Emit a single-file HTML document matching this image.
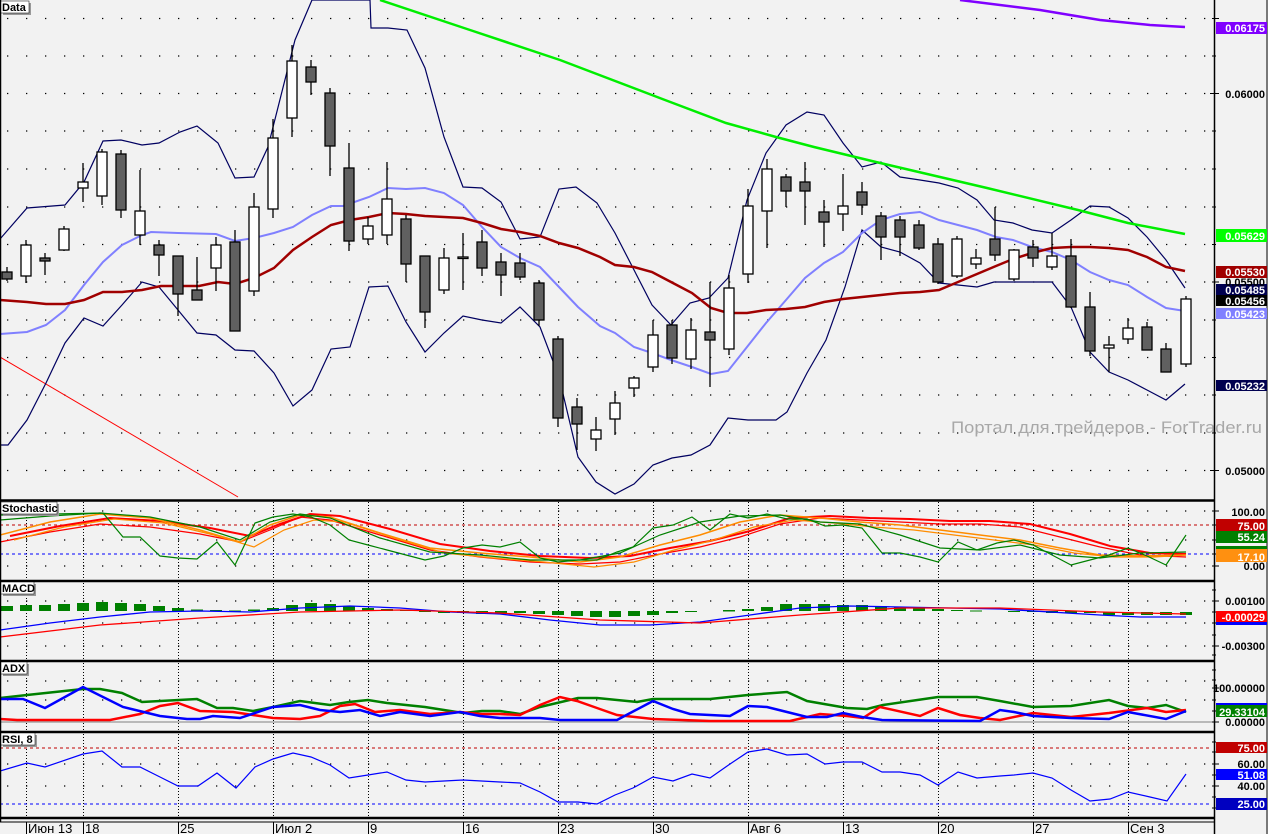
<!DOCTYPE html>
<html><head><meta charset="utf-8"><style>
html,body{margin:0;padding:0;background:#f2f2f2}
svg{display:block}
.ax{font-family:"Liberation Sans",sans-serif;font-weight:bold;font-size:11px;fill:#000}
.lb{font-family:"Liberation Sans",sans-serif;font-weight:bold;font-size:11px;fill:#fff}
.dt{font-family:"Liberation Sans","DejaVu Sans",sans-serif;font-size:13px;fill:#000}
.tt{font-family:"Liberation Sans",sans-serif;font-weight:bold;font-size:11px;fill:#000}
</style></head><body>
<svg width="1268" height="834" viewBox="0 0 1268 834" xmlns="http://www.w3.org/2000/svg">
<rect width="1268" height="834" fill="#f2f2f2"/>
<g stroke="#000" stroke-width="1.3" stroke-dasharray="1.3 17.7" stroke-dashoffset="-7">
<path d="M0 18.5H1210M0 56H1210M0 93.5H1210M0 131H1210M0 169H1210M0 207H1210M0 244.5H1210M0 282H1210M0 320H1210M0 357.5H1210M0 395H1210M0 433H1210M0 470.5H1210"/>
<path d="M0 511H1210M0 540H1210M0 566H1210M0 601H1210M0 623H1210M0 646H1210M0 681H1210M0 700H1210M0 764H1210M0 786H1210"/>
</g>
<g stroke="#000" stroke-width="1" stroke-dasharray="1 2">
<path d="M26.5 502V580M83.5 502V580M178.5 502V580M273.5 502V580M368.5 502V580M463.5 502V580M558.5 502V580M653.5 502V580M748.5 502V580M843.5 502V580M938.5 502V580M1033.5 502V580M1128.5 502V580"/>
<path d="M26.5 583V660M83.5 583V660M178.5 583V660M273.5 583V660M368.5 583V660M463.5 583V660M558.5 583V660M653.5 583V660M748.5 583V660M843.5 583V660M938.5 583V660M1033.5 583V660M1128.5 583V660"/>
<path d="M26.5 663V730M83.5 663V730M178.5 663V730M273.5 663V730M368.5 663V730M463.5 663V730M558.5 663V730M653.5 663V730M748.5 663V730M843.5 663V730M938.5 663V730M1033.5 663V730M1128.5 663V730"/>
<path d="M26.5 734V816M83.5 734V816M178.5 734V816M273.5 734V816M368.5 734V816M463.5 734V816M558.5 734V816M653.5 734V816M748.5 734V816M843.5 734V816M938.5 734V816M1033.5 734V816M1128.5 734V816"/>
</g>
<path d="M0 357L238 497" stroke="#ff0000" stroke-width="1" fill="none"/>
<g fill="none" stroke="#000060" stroke-width="1.2">
<polyline points="0,239 27,208 65,205 84,182 103,141 121,140 142,145 159,143 180,132 197,126 218,143 235,178 254,177 268,147 295,40 312,0 370,0 371,28 388,28 407,30 425,68 444,137 463,187 482,188 501,202 520,239 540,237 559,189 576,187 597,203 615,233 652,305 671,325 690,303 709,298 728,278 747,200 766,153 786,125 807,112 824,115 843,143 862,167 881,162 900,177 920,180 939,183 958,188 977,200 994,220 1013,223 1032,230 1052,233 1071,220 1090,206 1109,207 1128,218 1147,237 1166,260 1185,288"/>
<polyline points="0,445 8,445 27,420 46,383 65,343 84,318 103,326 122,305 142,282 159,287 178,310 197,333 216,335 235,350 254,351 274,373 293,406 312,390 331,349 350,347 369,287 388,286 406,322 425,352 444,333 463,316 482,320 501,323 520,307 540,327 559,377 578,457 596,482 615,494 634,484 653,465 672,458 691,455 710,445 728,418 748,420 776,420 787,412 807,373 826,340 845,287 862,230 881,247 900,252 920,263 939,283 958,285 977,287 994,282 1052,282 1071,307 1090,352 1109,372 1128,380 1147,390 1166,400 1185,384"/>
</g>
<polyline fill="none" stroke="#8080ff" stroke-width="2" points="0,334 27,332 46,325 65,310 84,285 103,262 122,245 142,235 151,232 178,233 216,234 235,241 254,238 274,233 293,227 312,215 331,206 343,206 369,197 388,188 406,189 425,188 444,193 463,205 482,227 501,247 520,258 540,267 559,287 578,307 600,326 615,333 634,347 652,353 671,360 692,367 711,374 728,371 747,347 766,323 786,300 805,278 824,263 843,252 862,233 881,220 900,214 920,212 939,220 958,225 977,230 996,237 1013,240 1032,247 1052,252 1071,260 1090,272 1109,280 1128,285 1147,297 1166,308 1185,311"/>
<polyline fill="none" stroke="#a00000" stroke-width="2.5" points="0,300 27,302 46,304 65,304 84,300 103,292 122,292 142,290 161,286 199,286 218,282 235,284 254,278 274,268 293,250 312,237 331,225 350,220 369,217 388,213 406,214 425,216 444,217 463,218 482,223 501,229 520,232 540,236 559,243 578,248 600,257 615,265 634,267 652,272 671,282 692,293 711,308 728,313 747,313 766,310 786,309 805,307 824,302 843,299 862,297 881,295 900,293 920,292 939,290 958,282 977,274 996,266 1013,259 1032,253 1052,248 1071,247 1090,247 1109,248 1128,250 1147,257 1166,267 1185,271"/>
<polyline fill="none" stroke="#00ee00" stroke-width="2.5" points="380,0 470,30 560,60 665,100 726,123 776,137 814,147 876,162 987,188 1078,210 1128,223 1185,234"/>
<polyline fill="none" stroke="#8000ff" stroke-width="2.5" points="960,0 1040,10 1100,20 1150,25 1185,27"/>
<g stroke="#000" stroke-width="1.3">
<path d="M7 267V281M26 240V283M45 253V275M64 226V251M83 163V202M102 149V205M121 150V218M140 170V245M159 240V276M178 256V316M197 257V300M216 237V291M235 230V331M254 193V296M273 119V218M292 45V137M311 60V95M330 88V176M349 143V251M368 217V244M387 162V244M406 215V282M425 256V328M444 248V294M463 233V290M482 230V276M501 253V296M520 253V280M539 280V326M558 336V427M577 398V450M596 417V451M615 391V435M634 376V397M653 320V372M672 320V364M691 318V369M710 282V387M729 275V355M748 189V283M767 159V248M786 174V207M805 162V225M824 200V247M843 174V231M862 182V215M881 212V260M900 216V256M919 220V250M938 238V284M957 236V278M976 249V269M995 207V261M1014 249V281M1033 240V267M1052 233V270M1071 239V308M1090 292V356M1109 336V372M1128 318V344M1147 322V350M1166 343V372M1186 296V367"/>
</g>
<g stroke="#000" stroke-width="1.3" fill="#606060">
<rect x="2" y="272" width="10" height="7"/><rect x="40" y="258" width="10" height="3"/><rect x="116" y="154" width="10" height="56"/><rect x="154" y="245" width="10" height="10"/><rect x="173" y="256" width="10" height="38"/><rect x="192" y="290" width="10" height="10"/><rect x="230" y="242" width="10" height="89"/><rect x="306" y="67" width="10" height="15"/><rect x="325" y="93" width="10" height="53"/><rect x="344" y="168" width="10" height="73"/><rect x="401" y="219" width="10" height="45"/><rect x="420" y="256" width="10" height="56"/><rect x="477" y="242" width="10" height="26"/><rect x="496" y="262" width="10" height="13"/><rect x="515" y="263" width="10" height="14"/><rect x="534" y="283" width="10" height="37"/><rect x="553" y="339" width="10" height="79"/><rect x="572" y="407" width="10" height="17"/><rect x="667" y="325" width="10" height="33"/><rect x="705" y="332" width="10" height="8"/><rect x="781" y="177" width="10" height="14"/><rect x="800" y="182" width="10" height="9"/><rect x="819" y="212" width="10" height="10"/><rect x="857" y="192" width="10" height="13"/><rect x="876" y="216" width="10" height="21"/><rect x="895" y="220" width="10" height="17"/><rect x="914" y="225" width="10" height="23"/><rect x="933" y="244" width="10" height="38"/><rect x="990" y="239" width="10" height="16"/><rect x="1028" y="247" width="10" height="11"/><rect x="1066" y="256" width="10" height="51"/><rect x="1085" y="307" width="10" height="44"/><rect x="1142" y="327" width="10" height="23"/><rect x="1161" y="349" width="10" height="23"/>
</g>
<g stroke="#000" stroke-width="1.3" fill="#fff">
<rect x="21" y="245" width="10" height="31"/><rect x="59" y="229" width="10" height="21"/><rect x="78" y="182" width="10" height="6"/><rect x="97" y="152" width="10" height="44"/><rect x="135" y="211" width="10" height="24"/><rect x="211" y="245" width="10" height="23"/><rect x="249" y="207" width="10" height="84"/><rect x="268" y="138" width="10" height="71"/><rect x="287" y="61" width="10" height="57"/><rect x="363" y="226" width="10" height="13"/><rect x="382" y="199" width="10" height="36"/><rect x="439" y="258" width="10" height="32"/><rect x="458" y="257" width="10" height="1.5"/><rect x="591" y="430" width="10" height="9"/><rect x="610" y="403" width="10" height="16"/><rect x="629" y="378" width="10" height="10"/><rect x="648" y="335" width="10" height="32"/><rect x="686" y="330" width="10" height="29"/><rect x="724" y="288" width="10" height="61"/><rect x="743" y="206" width="10" height="68"/><rect x="762" y="169" width="10" height="42"/><rect x="838" y="206" width="10" height="8"/><rect x="952" y="239" width="10" height="37"/><rect x="971" y="258" width="10" height="6"/><rect x="1009" y="250" width="10" height="29"/><rect x="1047" y="256" width="10" height="11"/><rect x="1104" y="345" width="10" height="3"/><rect x="1123" y="328" width="10" height="11"/><rect x="1181" y="299" width="10" height="65"/>
</g>
<text x="951" y="433" font-family="Liberation Sans,sans-serif" font-size="17" fill="#a8a8a8" textLength="311" lengthAdjust="spacingAndGlyphs">Портал для трейдеров - ForTrader.ru</text>

<path d="M0 525H1210" stroke="#c00000" stroke-width="1" stroke-dasharray="3 3"/>
<path d="M0 554H1210" stroke="#0000ff" stroke-width="1" stroke-dasharray="3 3"/>
<g fill="none">
<polyline stroke="#ff0000" stroke-width="1.2" transform="translate(0,12)" points="0,530 50,520 100,512 150,515 200,522 240,530 270,518 300,505 330,508 380,523 430,538 480,545 530,550 580,552 620,550 660,542 700,535 740,525 780,512 820,506 860,508 900,510 940,512 980,512 1020,515 1060,525 1100,535 1140,543 1186,545"/>
<polyline stroke="#ff0000" stroke-width="2" transform="translate(10,6)" points="0,530 50,520 100,512 150,515 200,522 240,530 270,518 300,508 330,510 380,523 430,538 480,545 530,550 580,552 620,550 660,542 700,535 740,525 780,512 820,510 860,512 900,513 940,515 980,515 1020,518 1060,528 1100,540 1140,547 1176,548"/>
<polyline stroke="#ff8c00" stroke-width="1.5" points="0,535 50,522 100,514 150,518 200,530 240,542 270,525 300,515 330,517 380,533 430,548 480,553 530,557 580,562 620,557 660,545 700,535 740,522 780,515 820,518 860,522 900,525 940,530 980,535 1020,540 1060,548 1100,555 1140,556 1186,555"/>
<polyline stroke="#ff8c00" stroke-width="1.2" transform="translate(14,5)" points="0,535 50,522 100,514 150,518 200,530 240,542 270,525 300,515 330,517 380,533 430,548 480,553 530,557 580,562 620,557 660,545 700,535 740,522 780,515 820,518 860,522 900,525 940,530 980,535 1020,540 1060,548 1100,552 1140,552 1172,550"/>
<polyline stroke="#008000" stroke-width="1.2" points="0,520 50,516 100,513 150,517 200,527 240,540 270,522 300,514 330,518 380,538 430,552 480,555 530,560 580,560 620,553 660,535 700,522 740,516 780,515 820,522 860,524 900,535 940,548 980,550 1020,545 1060,555 1100,558 1140,553 1186,552"/>
<polyline stroke="#008000" stroke-width="1.2" points="0,515 20,515 53,514 103,513 123,537 140,537 160,556 178,558 197,559 217,542 235,565 255,523 273,517 293,514 311,517 330,525 349,540 368,545 387,550 406,555 425,560 444,556 463,548 482,545 500,547 520,542 540,558 558,562 578,560 597,560 617,552 633,547 653,528 673,525 692,517 710,530 730,514 748,518 767,514 787,519 807,519 825,526 843,525 862,528 882,553 900,553 920,557 938,562 958,542 977,550 997,543 1014,540 1033,545 1052,555 1071,565 1090,560 1109,555 1128,548 1147,556 1166,565 1186,535"/>
</g>

<g fill="#008000">
<rect x="1" y="606" width="12" height="5"/><rect x="20" y="605" width="12" height="6"/><rect x="39" y="605" width="12" height="6"/><rect x="58" y="604" width="12" height="7"/><rect x="77" y="603" width="12" height="8"/><rect x="96" y="602" width="12" height="9"/><rect x="115" y="603" width="12" height="8"/><rect x="134" y="604" width="12" height="7"/><rect x="153" y="606" width="12" height="5"/><rect x="172" y="608" width="12" height="3"/><rect x="191" y="609.5" width="12" height="1.5"/><rect x="210" y="610" width="12" height="1"/><rect x="229" y="610.5" width="12" height="1"/><rect x="248" y="609.5" width="12" height="1.5"/><rect x="267" y="608" width="12" height="3"/><rect x="286" y="605" width="12" height="6"/><rect x="305" y="603" width="12" height="8"/><rect x="324" y="604" width="12" height="7"/><rect x="343" y="606" width="12" height="5"/><rect x="362" y="608" width="12" height="3"/><rect x="381" y="609" width="12" height="2"/><rect x="400" y="610" width="12" height="1"/><rect x="419" y="611" width="12" height="1"/><rect x="438" y="611" width="12" height="2"/><rect x="457" y="611" width="12" height="2"/><rect x="476" y="611" width="12" height="3"/><rect x="495" y="611" width="12" height="3"/><rect x="514" y="611" width="12" height="2"/><rect x="533" y="611" width="12" height="3"/><rect x="552" y="611" width="12" height="4"/><rect x="571" y="611" width="12" height="5"/><rect x="590" y="611" width="12" height="6"/><rect x="609" y="611" width="12" height="6"/><rect x="628" y="611" width="12" height="5"/><rect x="647" y="611" width="12" height="4"/><rect x="666" y="611" width="12" height="2"/><rect x="685" y="611" width="12" height="1"/><rect x="723" y="610" width="12" height="1.5"/><rect x="742" y="609" width="12" height="2"/><rect x="761" y="607" width="12" height="4"/><rect x="780" y="604" width="12" height="7"/><rect x="799" y="604" width="12" height="7"/><rect x="818" y="604" width="12" height="7"/><rect x="837" y="605" width="12" height="6"/><rect x="856" y="605" width="12" height="6"/><rect x="875" y="606" width="12" height="5"/><rect x="894" y="607" width="12" height="4"/><rect x="913" y="608" width="12" height="3"/><rect x="932" y="609" width="12" height="2"/><rect x="951" y="610" width="12" height="1"/><rect x="970" y="610.5" width="12" height="1"/><rect x="1008" y="611" width="12" height="1"/><rect x="1027" y="611" width="12" height="1"/><rect x="1046" y="611" width="12" height="2"/><rect x="1065" y="611" width="12" height="2"/><rect x="1084" y="611" width="12" height="2"/><rect x="1103" y="612" width="12" height="3"/><rect x="1122" y="612" width="12" height="3"/><rect x="1141" y="612" width="12" height="3"/><rect x="1160" y="612" width="12" height="3"/><rect x="1180" y="612" width="12" height="3"/>
</g>
<polyline fill="none" stroke="#0000ff" stroke-width="1.3" points="0,630 50,623 100,617 150,612 200,611 250,612 300,608 350,606 400,608 450,612 500,614 550,620 600,625 650,625 700,622 750,615 800,608 850,606 900,607 950,608 1000,609 1100,615 1140,617 1186,617"/>
<polyline fill="none" stroke="#ff0000" stroke-width="1.3" points="0,637 100,625 200,618 300,612 400,610 500,613 600,620 700,623 800,615 900,608 1000,608 1100,612 1186,614"/>

<path d="M0 722H1214" stroke="#808080" stroke-width="1"/>
<polyline fill="none" stroke="#008000" stroke-width="2.5" points="0,698 27,695 83,689 100,689 122,693 142,702 197,699 217,708 233,708 253,711 273,707 300,701 330,705 349,702 368,700 387,703 406,705 425,707 444,710 463,713 482,711 500,711 520,714 540,707 578,698 597,698 637,702 653,699 710,699 748,695 787,692 807,701 847,708 867,709 883,705 938,697 977,697 1000,701 1033,707 1071,706 1109,700 1128,706 1147,708 1166,705 1186,712"/>
<polyline fill="none" stroke="#ff0000" stroke-width="2.5" points="0,719 17,720 110,720 140,714 160,706 178,703 200,711 233,712 253,715 273,718 300,719 320,716 340,706 355,704 375,712 400,710 430,714 460,712 480,714 500,714 520,715 540,705 560,697 577,701 597,708 617,715 653,719 710,721 790,721 820,714 847,716 863,718 880,707 920,716 938,708 960,715 980,718 1000,720 1033,713 1071,717 1109,713 1147,708 1166,712 1186,710"/>
<polyline fill="none" stroke="#0000ff" stroke-width="2.5" points="0,699 23,699 45,708 83,687 123,707 160,716 187,719 200,719 213,716 240,718 273,707 300,705 320,710 340,712 360,710 380,716 400,712 430,716 460,712 480,716 500,718 540,718 560,720 617,720 653,701 673,709 690,714 730,716 748,706 767,707 787,712 807,717 827,717 843,713 862,717 882,720 980,721 1000,710 1014,712 1033,716 1071,718 1109,719 1128,712 1166,719 1186,711"/>

<path d="M0 748H1210" stroke="#c00000" stroke-width="1" stroke-dasharray="3 3"/>
<path d="M0 804H1210" stroke="#0000ff" stroke-width="1" stroke-dasharray="3 3"/>
<polyline fill="none" stroke="#0000ff" stroke-width="1.2" points="0,771 27,763 45,767 83,754 102,751 122,767 140,767 160,777 178,786 198,786 217,773 236,788 255,767 273,759 293,753 311,757 330,765 349,778 368,775 387,772 406,780 425,782 463,780 500,782 520,783 540,792 558,802 578,802 597,804 615,795 633,788 653,777 673,781 692,774 710,778 730,764 748,752 767,749 787,755 807,754 825,764 843,762 862,762 882,772 900,772 920,775 938,785 958,772 977,778 1000,776 1014,775 1033,773 1052,778 1071,790 1090,801 1110,799 1128,792 1150,797 1167,801 1186,774"/>

<g stroke="#000" stroke-width="2.5">
<path d="M0 500.5H1214M0 581H1214M0 661H1214M0 732H1214M0 818H1214"/>
</g>
<path d="M0 822H1214" stroke="#000" stroke-width="1"/>
<path d="M1214.5 0V834" stroke="#000" stroke-width="1.5"/>
<path d="M0.5 0V822" stroke="#000" stroke-width="1.5"/>
<path d="M1267 0V834" stroke="#000" stroke-width="1"/>
<g stroke="#000" stroke-width="1">
<path d="M1212 18.5H1219M1212 56H1216M1210 93.5H1219M1212 131H1216M1212 169H1216M1212 207H1216M1212 244.5H1216M1212 282H1219M1212 320H1216M1212 357.5H1216M1212 395H1216M1212 433H1216M1210 470.5H1219"/>
<path d="M1212 511H1219M1212 525H1216M1212 540H1216M1212 554H1216M1212 566H1219M1212 590H1216M1212 601H1219M1212 612H1216M1212 623H1219M1212 635H1216M1212 646H1219M1212 655H1216M1212 670H1216M1212 680H1216M1212 688H1219M1212 700H1216M1212 711H1216M1212 722H1219M1212 742H1216M1212 752H1216M1212 764H1219M1212 775H1216M1212 786H1219M1212 797H1216M1212 808H1216"/>
</g>
<g stroke="#000" stroke-width="1">
<path d="M26.5 822V834M83.5 822V834M178.5 822V834M273.5 822V834M368.5 822V834M463.5 822V834M558.5 822V834M653.5 822V834M748.5 822V834M843.5 822V834M938.5 822V834M1033.5 822V834M1128.5 822V834"/>
</g>
<g class="dt">
<text x="28" y="833">Июн 13</text><text x="85" y="833">18</text><text x="180" y="833">25</text><text x="275" y="833">Июл 2</text><text x="370" y="833">9</text><text x="465" y="833">16</text><text x="560" y="833">23</text><text x="655" y="833">30</text><text x="750" y="833">Авг 6</text><text x="845" y="833">13</text><text x="940" y="833">20</text><text x="1035" y="833">27</text><text x="1130" y="833">Сен 3</text>
</g>
<rect x="1216" y="22" width="51" height="12" fill="#8000ff"/>
<rect x="1216" y="229" width="51" height="13" fill="#00ff00"/>
<rect x="1216" y="266" width="51" height="12" fill="#a00000"/>
<rect x="1216" y="284" width="51" height="11" fill="#000050"/>
<rect x="1216" y="295" width="51" height="11" fill="#000"/>
<rect x="1216" y="308" width="51" height="11" fill="#8080ff"/>
<rect x="1216" y="380" width="51" height="11" fill="#000050"/>
<rect x="1216" y="519" width="51" height="12" fill="#c00000"/>
<rect x="1216" y="531" width="51" height="12" fill="#008000"/>
<rect x="1216" y="546" width="51" height="3" fill="#008000"/>
<rect x="1216" y="549" width="51" height="13" fill="#ff9010"/>
<rect x="1216" y="611" width="51" height="11" fill="#ff0000"/>
<rect x="1216" y="622" width="51" height="3" fill="#0000ff"/>
<rect x="1216" y="705" width="51" height="12" fill="#008000"/>
<rect x="1216" y="703" width="51" height="2" fill="#0000ff"/>
<rect x="1216" y="742" width="51" height="11" fill="#c00000"/>
<rect x="1216" y="769" width="51" height="11" fill="#0000ff"/>
<rect x="1216" y="798" width="51" height="12" fill="#0000c0"/>
<g text-anchor="end">
<text class="lb" x="1265" y="32">0.06175</text>
<text class="ax" x="1265" y="98">0.06000</text>
<text class="lb" x="1265" y="240">0.05629</text>
<text class="lb" x="1265" y="276">0.05530</text>
<text class="ax" x="1265" y="286">0.05500</text>
<text class="lb" x="1265" y="294">0.05485</text>
<text class="lb" x="1265" y="305">0.05456</text>
<text class="lb" x="1265" y="318">0.05423</text>
<text class="lb" x="1265" y="390">0.05232</text>
<text class="ax" x="1265" y="475">0.05000</text>
<text class="ax" x="1265" y="516">100.00</text>
<text class="lb" x="1265" y="530">75.00</text>
<text class="lb" x="1265" y="541">55.24</text>
<text class="lb" x="1265" y="561">17.10</text>
<text class="ax" x="1265" y="570">0.00</text>
<text class="ax" x="1265" y="605">0.00100</text>
<text class="lb" x="1265" y="621">-0.00029</text>
<text class="ax" x="1265" y="650">-0.00300</text>
<text class="ax" x="1265" y="692">100.00000</text>
<text class="lb" x="1265" y="716">29.33104</text>
<text class="ax" x="1265" y="726">0.00000</text>
<text class="lb" x="1265" y="752">75.00</text>
<text class="ax" x="1265" y="768">60.00</text>
<text class="lb" x="1265" y="779">51.08</text>
<text class="ax" x="1265" y="790">40.00</text>
<text class="lb" x="1265" y="808">25.00</text>
</g>
<g>
<rect x="3" y="3" width="28" height="12" fill="#999"/><rect x="1" y="1" width="28" height="12" fill="#fff" stroke="#000" stroke-width="0.5"/><text class="tt" x="2" y="11">Data</text>
<rect x="3" y="504" width="56" height="12" fill="#999"/><rect x="1" y="502" width="56" height="12" fill="#fff" stroke="#000" stroke-width="0.5"/><text class="tt" x="2" y="512">Stochastic</text>
<rect x="3" y="584" width="33" height="12" fill="#999"/><rect x="1" y="582" width="33" height="12" fill="#fff" stroke="#000" stroke-width="0.5"/><text class="tt" x="2" y="592">MACD</text>
<rect x="3" y="664" width="26" height="12" fill="#999"/><rect x="1" y="662" width="26" height="12" fill="#fff" stroke="#000" stroke-width="0.5"/><text class="tt" x="2" y="672">ADX</text>
<rect x="3" y="735" width="34" height="12" fill="#999"/><rect x="1" y="733" width="34" height="12" fill="#fff" stroke="#000" stroke-width="0.5"/><text class="tt" x="2" y="743">RSI, 8</text>
</g>
</svg>
</body></html>
